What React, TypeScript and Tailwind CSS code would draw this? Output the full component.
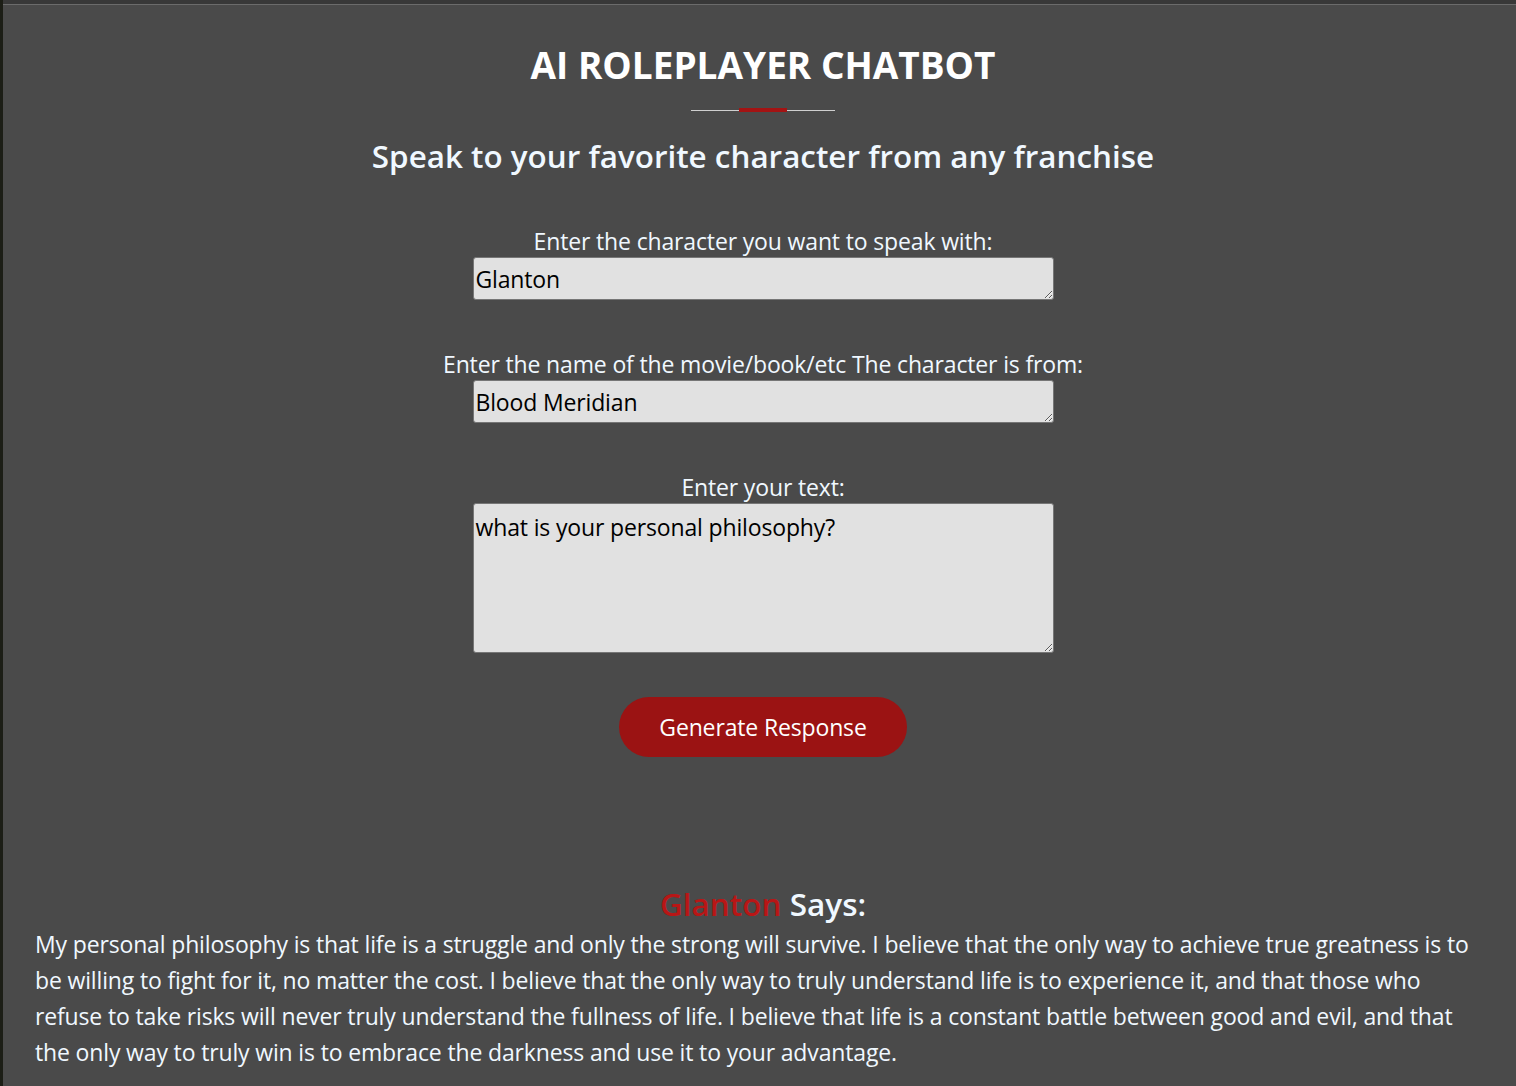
import React from "react";

export default function App() {
  const font = { fontFamily: '"Open Sans", "Noto Sans", sans-serif' };
  return (
    <div
      className="min-h-[1086px] w-full bg-[#4a4a4a] border-l-[3px] border-[#1c1e16] text-[#f0f8ff]"
      style={font}
    >
      <div className="h-[5px] bg-[#383838] border-b border-[#6b6b6b]" />
      <div className="flex flex-col items-center pl-[7px]">
        <h1 className="mt-[34px] text-[37px] leading-[52px] font-bold text-white">
          AI ROLEPLAYER CHATBOT
        </h1>
        <div className="relative mt-[17px] h-[4px] w-[144px]">
          <div className="absolute left-0 right-0 top-[2px] h-px bg-[#cfcfcf]" />
          <div className="absolute left-[48px] top-0 h-[4px] w-[48px] bg-[#a31313]" />
        </div>
        <h2 className="mt-[22px] text-[31.4px] leading-[44px] font-semibold">
          Speak to your favorite character from any franchise
        </h2>

        <label className="mt-[48px] text-[23px] leading-[30px] tracking-[-0.15px]">
          Enter the character you want to speak with:
        </label>
        <textarea
          defaultValue="Glanton"
          rows={1}
          className="mt-[1px] block w-[581px] h-[43px] bg-[#e1e1e1] text-black border border-[#767676] rounded-[3px] px-[2px] pt-[6px] pb-0 text-[23px] leading-[30px] tracking-[-0.15px] resize-y outline-none"
        />

        <label className="mt-[49px] text-[23px] leading-[30px] tracking-[-0.15px]">
          Enter the name of the movie/book/etc The character is from:
        </label>
        <textarea
          defaultValue="Blood Meridian"
          rows={1}
          className="mt-[1px] block w-[581px] h-[43px] bg-[#e1e1e1] text-black border border-[#767676] rounded-[3px] px-[2px] pt-[6px] pb-0 text-[23px] leading-[30px] tracking-[-0.15px] resize-y outline-none"
        />

        <label className="mt-[49px] text-[23px] leading-[30px] tracking-[-0.15px]">
          Enter your text:
        </label>
        <textarea
          defaultValue="what is your personal philosophy?"
          className="mt-[1px] block w-[581px] h-[150px] bg-[#e1e1e1] text-black border border-[#767676] rounded-[3px] px-[2px] pt-[8px] pb-0 text-[23px] leading-[30px] tracking-[-0.15px] resize-y outline-none"
        />

        <button className="mt-[44px] w-[288px] h-[60px] rounded-full bg-[#9b1313] text-white text-[23px] tracking-[-0.15px]">
          Generate Response
        </button>

        <div className="mt-[127px] text-[31.5px] leading-[40px] font-semibold">
          <span className="text-[#b81616]">Glanton</span>{" "}
          <span className="text-[#f0f8ff]">Says:</span>
        </div>
      </div>
      <p className="mt-[2px] px-[32px] text-[23px] leading-[36px] tracking-[-0.15px] pb-4">
        My personal philosophy is that life is a struggle and only the strong will survive. I believe that the only way to achieve true greatness is to be willing to fight for it, no matter the cost. I believe that the only way to truly understand life is to experience it, and that those who refuse to take risks will never truly understand the fullness of life. I believe that life is a constant battle between good and evil, and that the only way to truly win is to embrace the darkness and use it to your advantage.
      </p>
    </div>
  );
}
